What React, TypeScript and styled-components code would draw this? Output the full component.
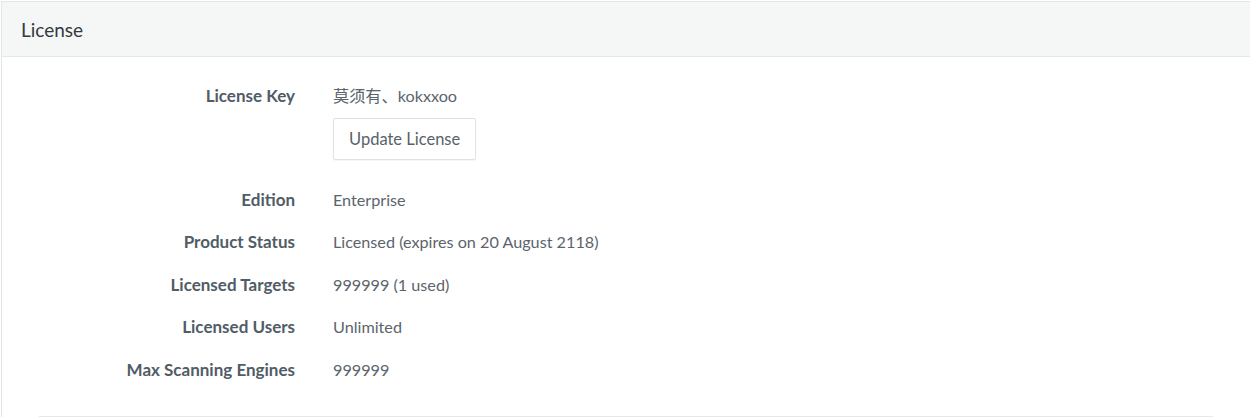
import React from "react"
import styled, { createGlobalStyle } from "styled-components"

const GlobalStyle = createGlobalStyle`
    html, body {
        margin: 0;
        padding: 0;
        background: #ffffff;
    }
    body {
        font-family: Lato, "Noto Sans CJK SC", sans-serif;
    }
`

const Page = styled.div`
    padding: 1px 0 0 1px;
    height: 418px;
    box-sizing: border-box;
    overflow: hidden;
`

const Panel = styled.section`
    border-top: 1px solid #e1e5e4;
    border-left: 1px solid #e1e5e4;
    background: #ffffff;
`

const PanelHeader = styled.header`
    height: 54px;
    display: flex;
    align-items: center;
    padding-left: 19px;
    background: #f5f7f6;
    border-bottom: 1px solid #e5e8e7;
    font-size: 19px;
    color: #333a3f;
`

const PanelBody = styled.div`
    padding: 28px 0 0;
`

const InfoList = styled.dl`
    margin: 0;
    display: grid;
    grid-template-columns: 293px 1fr;
    column-gap: 38px;
    row-gap: 20.5px;
    padding-bottom: 35px;
`

const Label = styled.dt`
    text-align: right;
    font-weight: bold;
    font-size: 17px;
    line-height: 22px;
    color: #505c66;
`

const Value = styled.dd<{ $extra?: number }>`
    margin: 0;
    padding-bottom: ${p => p.$extra ?? 0}px;
    font-size: 16.2px;
    line-height: 22px;
    color: #5b646c;
`

const KeyText = styled.div`
    margin-bottom: 11px;
`

const Button = styled.button`
    font-family: inherit;
    font-size: 16.5px;
    color: #58626a;
    background: #ffffff;
    border: 1px solid #dfe3e5;
    border-radius: 2px;
    height: 42px;
    padding: 0 15px;
    box-shadow: 0 1px 1px rgba(0, 0, 0, 0.04);
    cursor: pointer;
`

const Divider = styled.hr`
    margin: 0 37px 0 37px;
    border: none;
    border-top: 1px solid #e8e8e8;
`

const rows: [string, string][] = [
    ["Edition", "Enterprise"],
    ["Product Status", "Licensed (expires on 20 August 2118)"],
    ["Licensed Targets", "999999 (1 used)"],
    ["Licensed Users", "Unlimited"],
    ["Max Scanning Engines", "999999"],
]

export default function App() {
    return (
        <>
            <GlobalStyle />
            <Page>
                <Panel>
                    <PanelHeader>License</PanelHeader>
                    <PanelBody>
                        <InfoList>
                            <Label>License Key</Label>
                            <Value $extra={8}>
                                <KeyText>莫须有、kokxxoo</KeyText>
                                <Button>Update License</Button>
                            </Value>
                            {rows.map(([k, v]) => (
                                <React.Fragment key={k}>
                                    <Label>{k}</Label>
                                    <Value>{v}</Value>
                                </React.Fragment>
                            ))}
                        </InfoList>
                        <Divider />
                    </PanelBody>
                </Panel>
            </Page>
        </>
    )
}
